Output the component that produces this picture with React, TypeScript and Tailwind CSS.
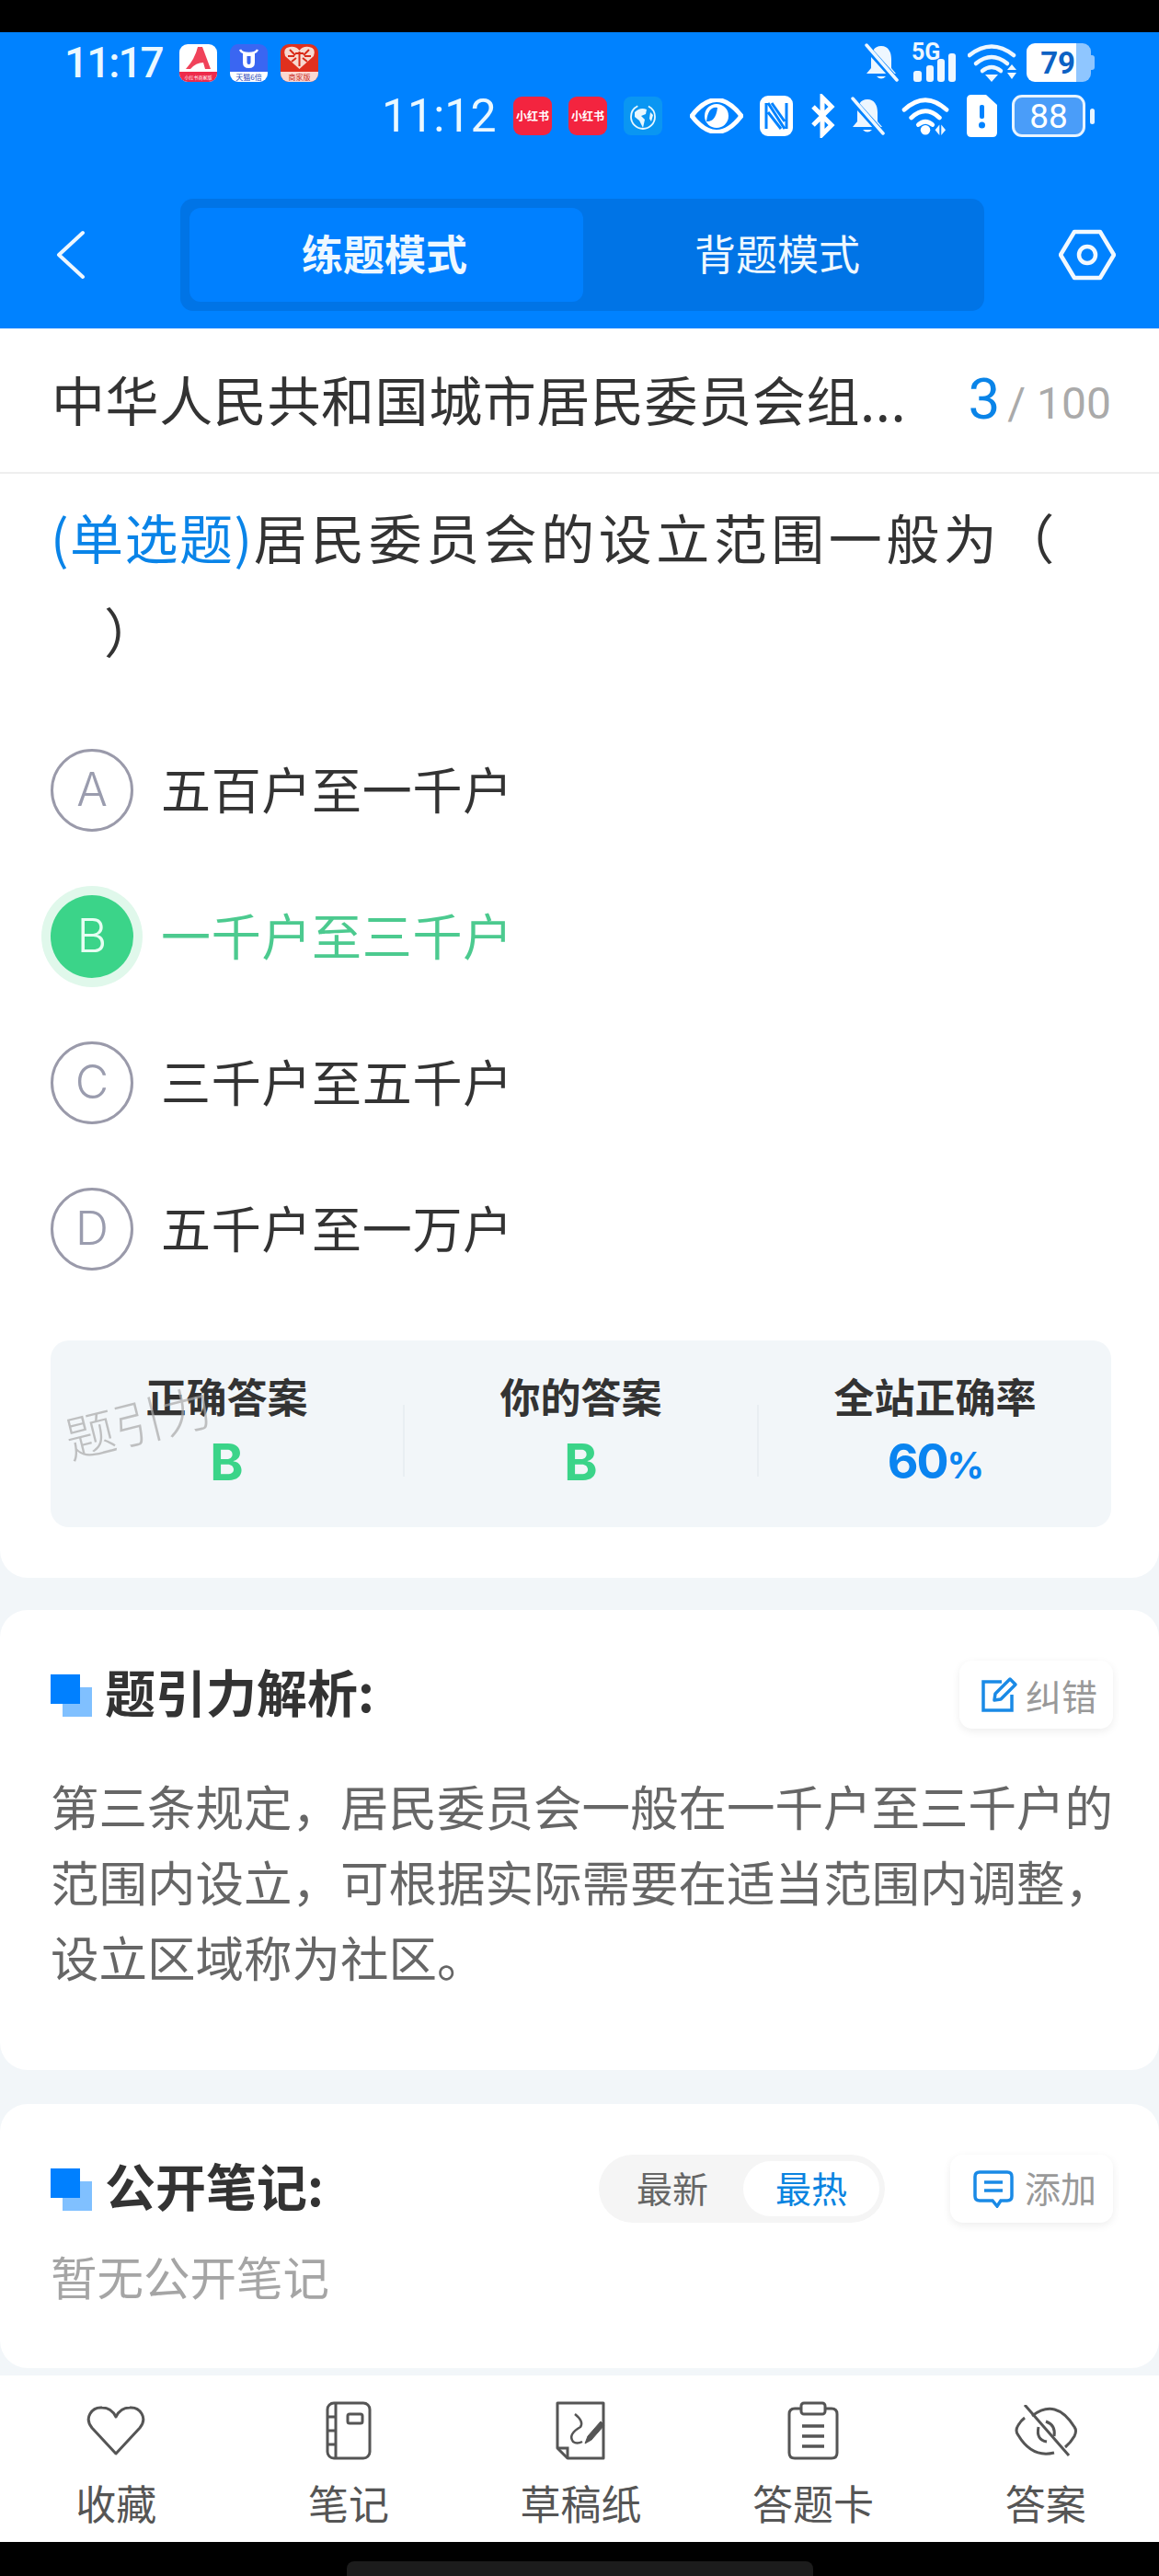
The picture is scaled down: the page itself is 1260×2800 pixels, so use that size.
import React from "react";

const cjk = "font-['Noto_Sans_CJK_SC','Noto_Sans',sans-serif]";

function AppIconA() {
  return (
    <div className="w-[41px] h-[41px] rounded-[9px] overflow-hidden bg-white flex flex-col">
      <svg viewBox="0 0 41 30" className="w-[41px] h-[30px]">
        <path d="M20 3 L25 3 L34 27 L28 27 L26 20 Q18 20 12 27 L7 27 Q17 16 20 3Z" fill="#f0425a" />
      </svg>
      <div className="flex-1 bg-[#ee2b4b] text-[5px] leading-[11px] text-center text-white whitespace-nowrap">小红书商家版</div>
    </div>
  );
}
function AppIconU() {
  return (
    <div className="w-[41px] h-[41px] rounded-[9px] overflow-hidden bg-[#3a66f2] flex flex-col">
      <svg viewBox="0 0 41 30" className="w-[41px] h-[30px]">
        <path d="M11 6 Q13 10 20.500 10 Q28 10 30 6" fill="none" stroke="#fff" strokeWidth="2.500" />
        <path d="M14 10 V20 Q14 26 20.500 26 Q27 26 27 20 V10Z M18.500 13 H22.500 V20 Q22.500 22 20.500 22 Q18.500 22 18.500 20Z" fill="#fff" fillRule="evenodd" />
      </svg>
      <div className="flex-1 bg-white text-[8px] leading-[11px] text-center text-[#2746b8] whitespace-nowrap">天猫6倍</div>
    </div>
  );
}
function AppIconP() {
  return (
    <div className="w-[41px] h-[41px] rounded-[9px] overflow-hidden bg-[#e0301e] flex flex-col">
      <svg viewBox="0 0 41 30" className="w-[41px] h-[30px]">
        <path d="M20.500 27 L5 13 Q2 4 10 3 Q17 2 20.500 7 Q24 2 31 3 Q39 4 36 13Z" fill="#f7d9d0" />
        <path d="M10 6 L16 12 M31 6 L25 12 M8 13 H15 M33 13 H26 M12 19 L17 15 M29 19 L24 15 M20.500 8 V24 M16 10 H25" stroke="#d92a18" strokeWidth="2" fill="none" />
      </svg>
      <div className="flex-1 bg-[#fbd9d2] text-[8px] leading-[11px] text-center text-[#c8281a] whitespace-nowrap">商家版</div>
    </div>
  );
}
function RedBook() {
  return (
    <div className="w-[42px] h-[42px] rounded-[9px] bg-[#f3243f] flex items-center justify-center text-white text-[12px] font-bold whitespace-nowrap">小红书</div>
  );
}
function Globe() {
  return (
    <svg viewBox="0 0 42 42" className="w-[42px] h-[42px]">
      <rect width="42" height="42" rx="8" fill="#0a96f2" />
      <circle cx="21" cy="22" r="13" fill="none" stroke="#e8f8ff" strokeWidth="1.800" strokeDasharray="55 12" />
      <path d="M12 17 Q18 11 25 14 L24 19 L19 21 L23 25 L21 34 L17 26 L12 22Z M29 17 L32 20 L30 27 L28 24Z" fill="#e8f8ff" />
    </svg>
  );
}
function Bell({ className = "" }: { className?: string }) {
  return (
    <svg viewBox="0 0 38 42" className={className}>
      <path d="M19 3 C11 3 8 10 8 17 V27 L3 33 H35 L30 27 V17 C30 10 27 3 19 3Z" fill="#eef7ff" />
      <path d="M14 36 Q19 41 24 36Z" fill="#eef7ff" />
      <path d="M2 3 L36 41" stroke="#0082ff" strokeWidth="7" />
      <path d="M3 2 L36 40" stroke="#eef7ff" strokeWidth="3.500" strokeLinecap="round" />
    </svg>
  );
}
function WifiUpDown() {
  return (
    <svg viewBox="0 0 53 42" className="w-[53px] h-[42px]">
      <g fill="none" stroke="#eef7ff" strokeWidth="4.500" strokeLinecap="round">
        <path d="M2 13 Q26 -6 50 13" />
        <path d="M9 22 Q26 8 43 22" />
        <path d="M16 30 Q26 22 36 30" />
      </g>
      <path d="M19 34 H33 L26 42Z" fill="#eef7ff" />
      <path d="M43 29 L53 29 L48 23Z M43 32 H53 L48 39Z" fill="#eef7ff" />
    </svg>
  );
}
function Wifi2() {
  return (
    <svg viewBox="0 0 56 46" className="w-[54px] h-[44px]">
      <g fill="none" stroke="#fff" strokeWidth="5" strokeLinecap="round">
        <path d="M3 16 Q27 -6 51 16" />
        <path d="M11 25 Q27 10 43 25" />
        <path d="M19 33 Q27 26 35 33" />
      </g>
      <circle cx="27" cy="39" r="5.500" fill="#fff" />
      <path d="M38 39 L43 33 V45Z M50 39 L45 33 V45Z" fill="#eef7ff" />
    </svg>
  );
}
function Signal5G() {
  return (
    <div className="relative w-[50px] h-[42px]">
      <span className="absolute left-[1px] top-[-3px] text-[25px] leading-[26px] font-bold text-[#eef7ff] font-['Roboto',sans-serif]">5G</span>
      <svg viewBox="0 0 50 42" className="w-[50px] h-[42px]">
        <rect x="3" y="30" width="9" height="12" rx="3" fill="#eef7ff" />
        <rect x="17" y="24" width="8" height="18" rx="3" fill="#eef7ff" />
        <rect x="29" y="17" width="8" height="25" rx="3" fill="#eef7ff" />
        <rect x="41" y="11" width="8" height="31" rx="3" fill="#eef7ff" />
      </svg>
    </div>
  );
}
function Battery79() {
  return (
    <div className="flex items-center w-[74px] h-[42px]">
      <div className="flex w-[70px] h-[42px] rounded-[9px] overflow-hidden">
        <div className="w-[54px] bg-white flex items-center justify-end pr-[1px] text-[#0c62c4] text-[33px] font-bold leading-none font-['Roboto',sans-serif]">79</div>
        <div className="flex-1 bg-[#8fc6ff]" />
      </div>
      <div className="w-[4px] h-[16px] bg-[#8fc6ff] rounded-r-[3px]" />
    </div>
  );
}
function Battery88() {
  return (
    <div className="flex items-center gap-[5px] w-[90px] h-[46px]">
      <div className="w-[80px] h-[46px] rounded-[11px] border-[3px] border-[#e8f4ff] bg-[#4a9df9] flex items-center justify-center text-white text-[37px] leading-none font-['Roboto',sans-serif]">88</div>
      <div className="w-[5px] h-[17px] bg-[#e8f4ff] rounded-[3px]" />
    </div>
  );
}
function Bullet() {
  return (
    <div className="relative w-[45px] h-[46px] shrink-0">
      <div className="absolute left-[13px] top-[14px] w-[32px] h-[32px] bg-[#80c0ff]" />
      <div className="absolute left-0 top-0 w-[32px] h-[32px] bg-[#0080ff]" />
    </div>
  );
}

function Option({ letter, text, active }: { letter: string; text: string; active?: boolean }) {
  return (
    <div className="flex items-center h-[159px]">
      <div
        className={
          active
            ? "w-[90px] h-[90px] rounded-full bg-[#3bd489] ring-[10px] ring-[#e0f8eb] flex items-center justify-center text-[50px] text-[#e6fff2] font-['Inter',sans-serif] font-light"
            : "w-[90px] h-[90px] rounded-full border-[3px] border-[#9a9aaa] flex items-center justify-center text-[50px] text-[#9a9cae] font-['Inter',sans-serif] font-light"
        }
      >
        {letter}
      </div>
      <div className={active ? "ml-[30px] mb-[4px] text-[54px] tracking-[0.7px] text-[#4cca8f]" : "ml-[30px] mb-[4px] text-[54px] tracking-[0.7px] text-[#333333]"}>{text}</div>
    </div>
  );
}

function Stat({ label, value, blue }: { label: string; value: React.ReactNode; blue?: boolean }) {
  return (
    <div className="flex-1 flex flex-col items-center pt-[32px]">
      <div className="text-[44px] leading-[56px] font-bold text-[#333333]">{label}</div>
      <div className={blue ? "mt-[14px] text-[52px] leading-[60px] tracking-[-2px] font-bold text-[#0a84f0] font-['Inter',sans-serif]" : "mt-[14px] text-[55px] leading-[60px] font-bold text-[#3bd489] font-['Inter',sans-serif]"}>{value}</div>
    </div>
  );
}

function Divider() {
  return <div className="w-[2px] h-[78px] mt-[70px] bg-[#e9eef2]" />;
}

function NavItem({ icon, label }: { icon: React.ReactNode; label: string }) {
  return (
    <div className="flex-1 flex flex-col items-center">
      <div className="h-[66px] flex items-center justify-center">{icon}</div>
      <div className="mt-[14px] text-[44px] leading-[62px] text-[#555555]">{label}</div>
    </div>
  );
}

export default function App() {
  return (
    <div className={`w-[1260px] h-[2800px] overflow-hidden flex flex-col bg-[#f2f6f9] ${cjk}`}>
      <div className="h-[35px] bg-black shrink-0" />

      <div className="h-[322px] bg-[#0082ff] shrink-0 flex flex-col">
        <div className="h-[54px] mt-[6px] pl-[70px] pr-[70px] flex items-center justify-between">
          <div className="flex items-center">
            <span className="text-[46px] font-medium text-[#eaf8ff] leading-none tracking-[-2px] font-['Roboto',sans-serif] w-[125px]">11:17</span>
            <div className="flex gap-[14px]">
              <AppIconA />
              <AppIconU />
              <AppIconP />
            </div>
          </div>
          <div className="flex items-center">
            <Bell className="w-[38px] h-[42px]" />
            <div className="ml-[13px]"><Signal5G /></div>
            <div className="ml-[12px]"><WifiUpDown /></div>
            <div className="ml-[11px]"><Battery79 /></div>
          </div>
        </div>
        <div className="h-[50px] mt-[6px] pl-[415px] pr-[70px] flex items-center justify-between">
          <div className="flex items-center">
            <span className="text-[50px] text-[#eaf8ff] leading-none font-['Roboto',sans-serif] w-[143px]">11:12</span>
            <div className="flex gap-[18px]">
              <RedBook />
              <RedBook />
              <Globe />
            </div>
          </div>
          <div className="flex items-center">
            <svg viewBox="0 0 58 38" className="w-[58px] h-[38px]">
              <path d="M2 19 Q29 -16 56 19 Q29 54 2 19Z" fill="none" stroke="#fff" strokeWidth="5" />
              <circle cx="29" cy="19" r="13" fill="#fff" />
              <path d="M18 25 Q28 26 30 10 Q20 8 18 25Z" fill="#0082ff" />
            </svg>
            <svg viewBox="0 0 40 48" className="ml-[16px] w-[40px] h-[48px]">
              <rect x="2" y="2" width="36" height="44" rx="9" fill="#fff" />
              <path d="M9 10 V38 M31 10 V38 M11 10 L29 38 M11 20 L25 38 M15 10 L29 30" stroke="#0082ff" strokeWidth="3" />
            </svg>
            <svg viewBox="0 0 28 48" className="ml-[16px] w-[28px] h-[48px]">
              <path d="M4 14 L24 34 L14 44 V4 L24 14 L4 34" fill="none" stroke="#fff" strokeWidth="5" />
            </svg>
            <Bell className="ml-[16px] w-[38px] h-[44px]" />
            <div className="ml-[18px]"><Wifi2 /></div>
            <svg viewBox="0 0 35 48" className="ml-[16px] w-[35px] h-[48px]">
              <path d="M6 1 H22 L34 12 V42 Q34 47 29 47 H6 Q1 47 1 42 V6 Q1 1 6 1Z" fill="#fff" />
              <rect x="15" y="12" width="5" height="15" rx="2" fill="#0082ff" />
              <circle cx="17.500" cy="34" r="3.500" fill="#0082ff" />
            </svg>
            <div className="ml-[15px]"><Battery88 /></div>
          </div>
        </div>

        <div className="flex-1 flex items-center pl-[60px] pr-[45px] pt-[46px]">
          <svg viewBox="0 0 32 54" className="w-[32px] h-[54px] shrink-0">
            <path d="M30 3 L4 27 L30 51" fill="none" stroke="#eef7ff" strokeWidth="4" strokeLinecap="round" strokeLinejoin="round" />
          </svg>
          <div className="ml-[104px] w-[874px] h-[122px] bg-[#0074e6] rounded-[14px] p-[10px] flex">
            <div className="w-[428px] bg-[#0080ff] rounded-[12px] flex items-center justify-center pr-[4px] pb-[4px] text-[45px] font-bold text-[#eef8ff]">练题模式</div>
            <div className="flex-1 flex items-center justify-center pr-[4px] pb-[4px] text-[45px] text-[#eef8ff]">背题模式</div>
          </div>
          <svg viewBox="0 0 62 56" className="ml-[81px] w-[62px] h-[56px] shrink-0">
            <path d="M17 3 H45 L60 28 L45 53 H17 L2 28Z" fill="none" stroke="#f2f9ff" strokeWidth="4.500" strokeLinejoin="round" />
            <circle cx="31" cy="28" r="9" fill="none" stroke="#f2f9ff" strokeWidth="4.500" />
          </svg>
        </div>
      </div>

      <div className="h-[158px] bg-white border-b-[2px] border-[#eeeeee] shrink-0 flex items-center pl-[56px] pr-[52px] justify-between">
        <div className="mb-[4px] text-[58px] tracking-[0.6px] text-[#333333] whitespace-nowrap">中华人民共和国城市居民委员会组...</div>
        <div className="mb-[3px] flex items-baseline font-['Roboto',sans-serif]">
          <span className="text-[62px] text-[#0a84e8] leading-none">3</span>
          <span className="ml-[8px] text-[48px] text-[#aaaaaa] leading-none">/ 100</span>
        </div>
      </div>

      <div className="bg-white rounded-b-[30px] shrink-0 h-[1200px] pl-[55px] pr-[52px] pt-[17px]">
        <div className="text-[58px] leading-[102px] text-[#333333] tracking-[4.500px] whitespace-nowrap">
          <span className="text-[#0a84e8] tracking-[1.500px]">(单选题)</span>
          居民委员会的设立范围一般为（
          <br />
          <span className="ml-[58px]">）</span>
        </div>
        <div className="mt-[43px]">
          <Option letter="A" text="五百户至一千户" />
          <Option letter="B" text="一千户至三千户" active />
          <Option letter="C" text="三千户至五千户" />
          <Option letter="D" text="五千户至一万户" />
        </div>
        <div className="relative mt-[42px] h-[203px] rounded-[20px] bg-[#f2f6f9] flex">
          <Stat label="正确答案" value="B" />
          <Divider />
          <Stat label="你的答案" value="B" />
          <Divider />
          <Stat label="全站正确率" value={<span>60<span className="text-[40px]">%</span></span>} blue />
          <div className="absolute left-[14px] top-[60px] -rotate-[14deg] text-[54px] leading-none font-light text-[#a8a8a8]/70 whitespace-nowrap">题引力</div>
        </div>
      </div>

      <div className="mt-[35px] h-[500px] bg-white rounded-[30px] shrink-0 pl-[55px] pr-[50px]">
        <div className="flex items-start justify-between pt-[55px]">
          <div className="flex items-start">
            <div className="mt-[15px]"><Bullet /></div>
            <div className="ml-[14px] mt-[-3px] text-[55px] leading-[70px] font-bold text-[#333333] whitespace-nowrap">题引力解析:</div>
          </div>
          <div className="w-[167px] h-[74px] rounded-[14px] bg-white shadow-[0_3px_10px_rgba(0,0,0,0.07)] flex items-center pl-[24px]">
            <svg viewBox="0 0 40 40" className="w-[40px] h-[40px]">
              <path d="M22 6 H2 V37 H33 V20" fill="none" stroke="#1a8ae6" strokeWidth="3.500" />
              <path d="M14 26 L15 19 L31 3 L37 9 L21 25Z" fill="none" stroke="#1a8ae6" strokeWidth="3.500" strokeLinejoin="round" />
            </svg>
            <span className="ml-[8px] text-[39px] text-[#999999]">纠错</span>
          </div>
        </div>
        <div className="mt-[42px] text-[52.500px] leading-[82px] text-[#666666] w-[1160px]">
          第三条规定，居民委员会一般在一千户至三千户的范围内设立，可根据实际需要在适当范围内调整，设立区域称为社区。
        </div>
      </div>

      <div className="mt-[37px] h-[287px] bg-white rounded-[30px] shrink-0 pl-[55px] pr-[50px]">
        <div className="flex items-start justify-between pt-[55px]">
          <div className="flex items-start">
            <div className="mt-[15px]"><Bullet /></div>
            <div className="ml-[14px] mt-[-3px] text-[55px] leading-[70px] font-bold text-[#333333] whitespace-nowrap">公开笔记:</div>
          </div>
          <div className="flex items-start">
            <div className="w-[311px] h-[74px] shrink-0 rounded-full bg-[#f5f5f5] flex items-center relative">
              <span className="ml-[41px] mb-[3px] text-[39px] text-[#666666]">最新</span>
              <div className="absolute left-[157px] top-[7px] w-[148px] h-[60px] pb-[3px] rounded-full bg-white flex items-center justify-center text-[39px] text-[#0a84e0]">最热</div>
            </div>
            <div className="ml-[71px] w-[177px] h-[74px] shrink-0 rounded-[14px] bg-white shadow-[0_3px_10px_rgba(0,0,0,0.07)] flex items-center pl-[25px]">
              <svg viewBox="0 0 44 42" className="w-[44px] h-[42px]">
                <path d="M7 3 H37 Q42 3 42 8 V29 Q42 34 37 34 H30 L26 40 L21 34 H7 Q2 34 2 29 V8 Q2 3 7 3Z" fill="none" stroke="#1a8ae6" strokeWidth="3.500" />
                <path d="M12 14 H32 M12 23 H32" stroke="#1a8ae6" strokeWidth="3.500" />
              </svg>
              <span className="ml-[12px] mb-[3px] text-[39px] text-[#999999]">添加</span>
            </div>
          </div>
        </div>
        <div className="mt-[22px] text-[50.500px] leading-[70px] text-[#a5a5a5]">暂无公开笔记</div>
      </div>

      <div className="mt-[8px] h-[181px] w-[1263px] bg-white shrink-0 flex pt-[27px]">
        <NavItem
          label="收藏"
          icon={
            <svg viewBox="0 0 64 56" className="w-[64px] h-[56px]">
              <path d="M32 53 L6 25 C-3 14 6 2 17 3 C24 3 29 7 32 13 C35 7 40 3 47 3 C58 2 67 14 58 25Z" fill="none" stroke="#555555" strokeWidth="3" strokeLinejoin="round" />
            </svg>
          }
        />
        <NavItem
          label="笔记"
          icon={
            <svg viewBox="0 0 50 64" className="w-[50px] h-[64px]">
              <rect x="2" y="2" width="46" height="60" rx="7" fill="none" stroke="#555555" strokeWidth="3" />
              <path d="M11 2 V62 M2 17 H11 M2 32 H11 M2 47 H11" stroke="#555555" strokeWidth="3" />
              <rect x="24" y="14" width="16" height="10" rx="2" fill="none" stroke="#555555" strokeWidth="3" />
            </svg>
          }
        />
        <NavItem
          label="草稿纸"
          icon={
            <svg viewBox="0 0 56 64" className="w-[56px] h-[64px]">
              <path d="M3 2 H53 V62 H14 L3 51Z" fill="none" stroke="#555555" strokeWidth="3" strokeLinejoin="round" />
              <path d="M3 51 H14 V62" fill="none" stroke="#555555" strokeWidth="3" />
              <path d="M22 14 Q32 22 28 28 Q14 36 20 44 Q24 47 30 44" fill="none" stroke="#555555" strokeWidth="2.500" />
              <path d="M33 46 L36 38 L50 22 L54 26 L40 42Z" fill="#555555" stroke="#555555" strokeWidth="1" />
            </svg>
          }
        />
        <NavItem
          label="答题卡"
          icon={
            <svg viewBox="0 0 56 64" className="w-[56px] h-[64px]">
              <path d="M15 8 H8 Q2 8 2 14 V56 Q2 62 8 62 H48 Q54 62 54 56 V14 Q54 8 48 8 H41" fill="none" stroke="#555555" strokeWidth="3" />
              <rect x="15" y="2" width="26" height="12" rx="3" fill="none" stroke="#555555" strokeWidth="3" />
              <path d="M16 27 H40 M16 38 H40 M16 49 H40" stroke="#555555" strokeWidth="3.500" />
            </svg>
          }
        />
        <NavItem
          label="答案"
          icon={
            <svg viewBox="0 0 70 56" className="w-[70px] h-[56px]">
              <path d="M20 12 Q46 -8 66 24 Q69 28 66 34 Q62 41 56 46 M44 52 Q20 58 5 33 Q1 28 5 22 Q8 17 12 14" fill="none" stroke="#555555" strokeWidth="3" />
              <path d="M35 18 Q46 22 44 34 M27 24 Q24 38 36 40" fill="none" stroke="#555555" strokeWidth="3" />
              <path d="M12 0 L60 55" stroke="#555555" strokeWidth="3" />
            </svg>
          }
        />
      </div>

      <div className="h-[37px] bg-black shrink-0 flex items-end justify-center">
        <div className="w-[507px] h-[16px] rounded-t-[8px] bg-[#1c1c1c]" />
      </div>
    </div>
  );
}
